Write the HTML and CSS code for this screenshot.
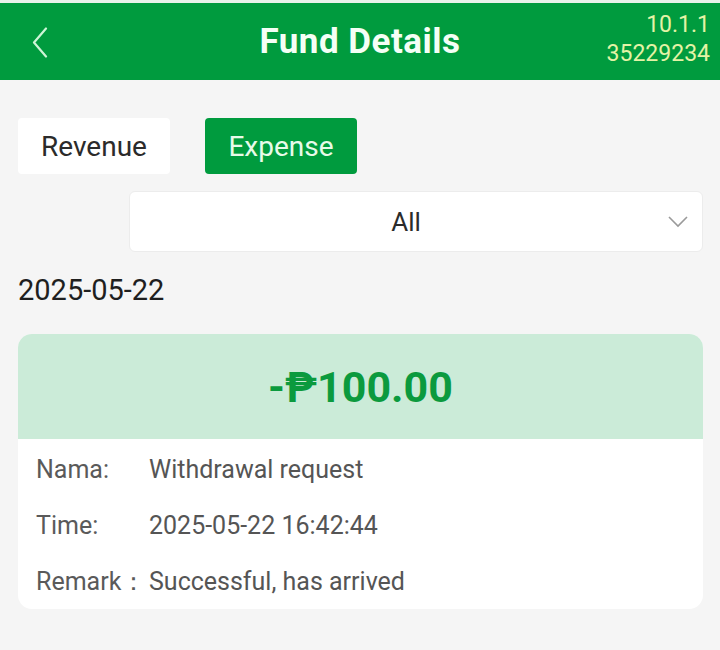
FILE: index.html
```html
<!DOCTYPE html>
<html>
<head>
<meta charset="utf-8">
<link rel="stylesheet" href="styles.css">
</head>
<body>
<div class="topline"></div>
<header class="header">
  <div class="back">
    <svg width="16" height="31" viewBox="0 0 16 31"><path d="M14 1.5 L2 15.5 L14 29.5" fill="none" stroke="#cdf5d6" stroke-width="2.2" stroke-linecap="round" stroke-linejoin="round"/></svg>
  </div>
  <h1 class="title">Fund Details</h1>
  <div class="version"><div>10.1.1</div><div>35229234</div></div>
</header>
<main class="content">
  <div class="tabs">
    <div class="tab">Revenue</div>
    <div class="tab active">Expense</div>
  </div>
  <div class="select-row">
    <div class="select">
      <span class="select-text">All</span>
      <svg class="chev" width="20" height="12" viewBox="0 0 20 12"><path d="M1 1 L10 10 L19 1" fill="none" stroke="#9a9a9a" stroke-width="1.6"/></svg>
    </div>
  </div>
  <div class="date">2025-05-22</div>
  <div class="card">
    <div class="card-top">-₱100.00</div>
    <div class="card-body">
      <div class="row"><span class="label">Nama:</span><span class="value">Withdrawal request</span></div>
      <div class="row"><span class="label">Time:</span><span class="value">2025-05-22 16:42:44</span></div>
      <div class="row"><span class="label">Remark：</span><span class="value">Successful, has arrived</span></div>
    </div>
  </div>
</main>
</body>
</html>
```

FILE: styles.css
```css
* { box-sizing: border-box; }
html, body { margin: 0; padding: 0; }
body {
  background: #f5f5f5;
  font-family: Roboto, "Noto Sans", "Liberation Sans", sans-serif;
  width: 720px;
  height: 650px;
  overflow: hidden;
}
.topline { height: 3px; background: #e8f3ea; }
.header {
  height: 77px;
  background: #009b3e;
  display: flex;
  align-items: center;
  justify-content: center;
  position: relative;
}
.back {
  position: absolute;
  left: 32px;
  top: 24px;
  display: flex;
}
.title {
  margin: 0;
  color: #f4fff6;
  font-size: 35px;
  font-weight: 700;
  letter-spacing: 0.5px;
  margin-top: -1px;
}
.version {
  position: absolute;
  right: 10px;
  top: 7px;
  text-align: right;
  color: #e4f3a6;
  font-size: 23px;
  line-height: 29px;
}
.content { padding: 38px 17px 0 18px; }
.tabs { display: flex; gap: 35px; }
.tab {
  width: 152px;
  height: 56px;
  background: #ffffff;
  border-radius: 4px;
  display: flex;
  align-items: center;
  justify-content: center;
  font-size: 28px;
  color: #2b2b2b;
}
.tab.active { background: #009b3e; color: #e8fbe9; }
.select-row { display: flex; justify-content: flex-end; margin-top: 17px; }
.select {
  width: 574px;
  height: 61px;
  background: #fff;
  border: 1px solid #ececec;
  border-radius: 6px;
  display: flex;
  align-items: center;
  justify-content: center;
  position: relative;
  padding-right: 20px;
}
.select-text { font-size: 26px; color: #2b2b2b; }
.chev { position: absolute; right: 14px; top: 24px; }
.date {
  font-size: 29px;
  color: #1f1f1f;
  margin-top: 21px;
  line-height: 34px;
}
.card {
  margin-top: 27px;
  background: #fff;
  border-radius: 14px;
  overflow: hidden;
  width: 685px;
}
.card-top {
  height: 105px;
  background: #cbebd8;
  display: flex;
  align-items: center;
  justify-content: center;
  color: #0b9a3e;
  font-size: 43px;
  font-weight: 700;
  padding-top: 1px;
}
.card-body { padding: 2px 18px 0; }
.row {
  display: flex;
  height: 56px;
  align-items: center;
  font-size: 25px;
  color: #5a5a5a;
}
.label { width: 113px; flex: none; white-space: nowrap; }
.value { color: #555; }
```
